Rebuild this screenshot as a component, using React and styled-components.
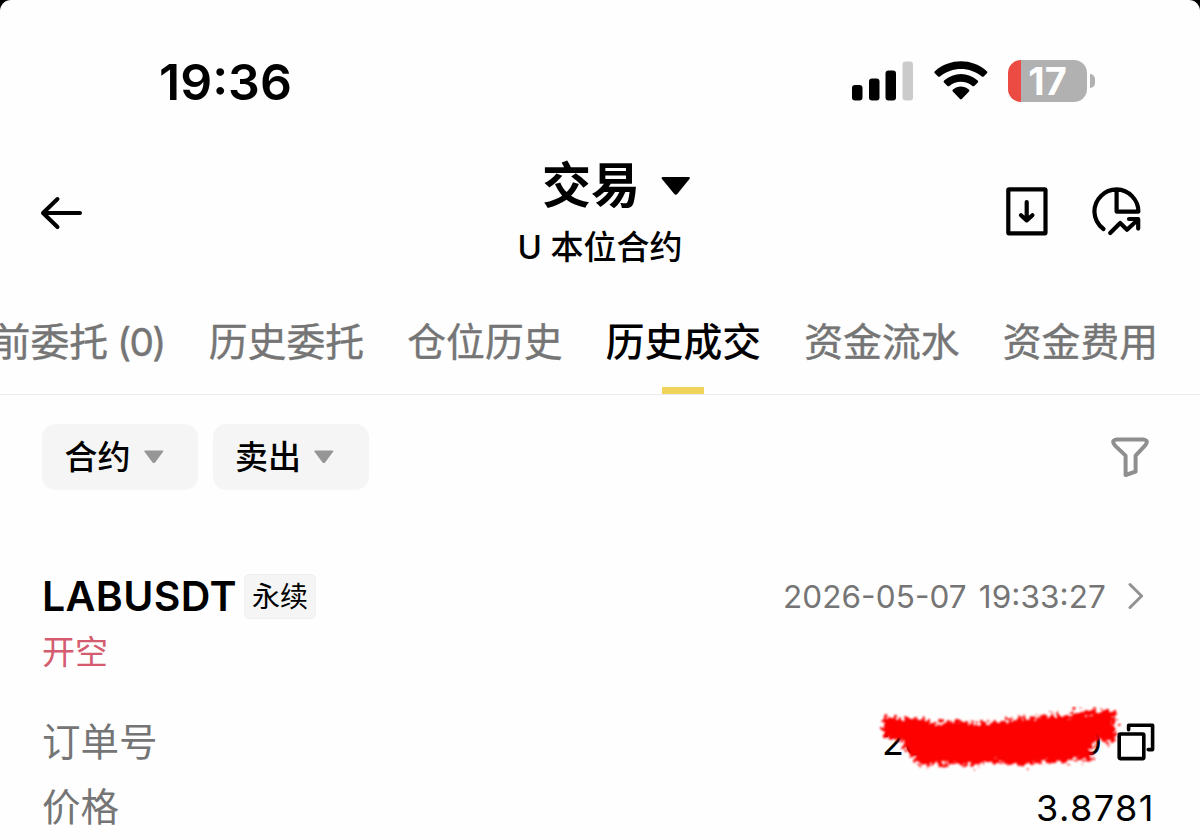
import React from 'react';
import styled, { createGlobalStyle } from 'styled-components';

const tabs = [
  { name: '当前委托', count: 0 },
  { name: '历史委托' },
  { name: '仓位历史' },
  { name: '历史成交', active: true },
  { name: '资金流水' },
  { name: '资金费用' },
];
const filters = ['合约', '卖出'];

function App() {
  return (
    <>
      <GlobalStyle />
      <Screen>
        <StatusBar>
          <Clock>19:36</Clock>
          <StatusIcons>
            <SignalIcon />
            <WifiIcon />
            <Battery>
              <BatteryBody>17</BatteryBody>
              <BatteryTip />
            </Battery>
          </StatusIcons>
        </StatusBar>

        <Header>
          <BackIcon />
          <Heading>
            <Title>
              交易
              <TitleCaret />
            </Title>
            <Subtitle>U 本位合约</Subtitle>
          </Heading>
          <HeaderActions>
            <DownloadIcon />
            <ChartIcon />
          </HeaderActions>
        </Header>

        <TabBar>
          {tabs.map((tab) => (
            <Tab key={tab.name} $active={tab.active}>
              <span>
                {tab.name}
                {tab.count !== undefined && <Count> ({tab.count})</Count>}
              </span>
            </Tab>
          ))}
        </TabBar>

        <FilterBar>
          {filters.map((name) => (
            <FilterButton key={name}>
              <span>{name}</span>
              <SmallCaret />
            </FilterButton>
          ))}
          <FunnelIcon />
        </FilterBar>

        <Trade>
          <TradeHead>
            <Symbol>LABUSDT</Symbol>
            <Tag>永续</Tag>
            <Time>2026-05-07 19:33:27</Time>
            <ChevronIcon />
          </TradeHead>
          <Side>开空</Side>
          <Row>
            <Label>订单号</Label>
            <OrderNumber>
              <span>20</span>
              <span>0</span>
              <Scribble />
            </OrderNumber>
            <CopyIcon />
          </Row>
          <Row>
            <Label>价格</Label>
            <Price>3.8781</Price>
          </Row>
        </Trade>
      </Screen>
    </>
  );
}
export default App;

function SignalIcon() {
  return (
    <svg width="62" height="40" viewBox="0 0 62 40">
      <rect x="0" y="24" width="10.5" height="15.5" rx="3" />
      <rect x="17" y="17.5" width="10.5" height="22" rx="3" />
      <rect x="33.5" y="9.5" width="10.5" height="30" rx="3" />
      <rect x="50.5" y="0.5" width="10.5" height="39" rx="3" fill="#cbcbcb" />
    </svg>
  );
}

function WifiIcon() {
  return (
    <svg width="54" height="40" viewBox="0 0 54 40">
      <path d="M0.8 12.2Q-0.2 11.2 0.9 10.2C16 -3 38 -3 52.8 10.2Q53.9 11.2 52.9 12.2L49.7 15.4Q48.8 16.3 47.8 15.4C36 5.4 18 5.4 6 15.4Q5 16.3 4.1 15.4Z" />
      <path d="M10 21.4Q9 20.4 10.1 19.4C20 10.7 34 10.7 43.7 19.4Q44.8 20.4 43.8 21.4L40.3 24.9Q39.4 25.8 38.4 24.9C31.5 19.4 22.3 19.4 15.4 24.9Q14.4 25.8 13.5 24.9Z" />
      <path d="M18.8 30.6Q17.8 29.6 19 28.6C23.6 24.4 30.2 24.4 34.8 28.6Q36 29.6 35 30.6L27.8 38Q26.9 38.9 26 38Z" />
    </svg>
  );
}

function BackIcon() {
  return (
    <svg width="44" height="36" viewBox="0 0 44 36" fill="none" stroke="#000" strokeWidth="4" strokeLinecap="round" strokeLinejoin="round">
      <path d="M40 18H3M17.5 4L3 18L17.5 32" />
    </svg>
  );
}

function TitleCaret() {
  return (
    <svg width="30" height="20" viewBox="0 0 30 20">
      <path d="M2.2 1H27.3Q30 1 28.2 3.3L16.5 17.8Q14.8 19.6 13.1 17.8L1.2 3.3Q-0.5 1 2.2 1Z" />
    </svg>
  );
}

function SmallCaret() {
  return (
    <svg width="20" height="14" viewBox="0 0 20 14" fill="#969696">
      <path d="M1.4 0.5H18.2Q20.2 0.5 18.9 2.1L11.1 12.4Q9.8 13.8 8.5 12.4L0.7 2.1Q-0.5 0.5 1.4 0.5Z" />
    </svg>
  );
}

function DownloadIcon() {
  return (
    <svg width="42" height="49" viewBox="0 0 42 49" fill="none" stroke="#000" strokeWidth="4.2" strokeLinecap="round" strokeLinejoin="round">
      <rect x="2.3" y="2.3" width="37.2" height="44" rx="0.8" />
      <path d="M20.7 15V33M15 28.2L20.7 33.4L26.4 28.2" />
    </svg>
  );
}

function ChartIcon() {
  return (
    <svg width="50" height="50" viewBox="0 0 50 50" fill="none" stroke="#000" strokeWidth="4.2" strokeLinecap="round" strokeLinejoin="round">
      <path d="M11.5 42A22.6 22.6 0 0 1 2.4 24.6A22.4 22.4 0 0 1 24.7 2.4A22.4 22.4 0 0 1 46.4 24.6H24.6V2.6" />
      <path d="M18.2 46L28.2 36L35 42.8L45.5 33M37 32H46.2V41.6" />
    </svg>
  );
}

function FunnelIcon() {
  return (
    <svg width="38" height="42" viewBox="0 0 38 42" fill="none" stroke="#8f8f8f" strokeWidth="4" strokeLinejoin="round">
      <path d="M5 2.6H33Q38 3.4 34.2 8.4L24.6 18.6V34.6L14.6 38V18.6L3.8 8.4Q0 3.4 5 2.6Z" />
    </svg>
  );
}

function ChevronIcon() {
  return (
    <svg width="16" height="28" viewBox="0 0 16 28" fill="none" stroke="#929292" strokeWidth="3" strokeLinecap="round" strokeLinejoin="round">
      <path d="M2 2.5L13.6 14L2 25.5" />
    </svg>
  );
}

function CopyIcon() {
  return (
    <svg width="38" height="38" viewBox="0 0 38 38" fill="none" stroke="#000" strokeWidth="3.6" strokeLinecap="round" strokeLinejoin="round">
      <rect x="2.2" y="11" width="24.6" height="24.6" rx="1" />
      <path d="M11.6 6.8V2.2H35.6V26.6H31.2" />
    </svg>
  );
}

function Scribble() {
  return (
    <ScribbleSvg viewBox="0 0 250 70">
      <filter id="rough" x="-5%" y="-15%" width="110%" height="130%">
        <feTurbulence type="fractalNoise" baseFrequency="0.24" numOctaves="2" seed="9" />
        <feDisplacementMap in="SourceGraphic" scale="17" xChannelSelector="R" yChannelSelector="G" />
        <feGaussianBlur stdDeviation="1" />
      </filter>
      <path
        filter="url(#rough)"
        fill="#fd0000"
        d="M11 11L24 13L34 11L50 14L66 17L84 15L108 17L130 15L152 12L178 9L198 9L206 5L216 6L228 4L236 5L243 4L243 35L236 38L228 32L220 42L220 56L206 53L194 57L172 56L150 60L124 56L102 59L82 58L64 59L44 58L40 50L33 45L29 33L20 34L11 30Z"
      />
    </ScribbleSvg>
  );
}

const GlobalStyle = createGlobalStyle`
  * {
    box-sizing: border-box;
  }
  body {
    margin: 0;
    background: #000;
  }
`;

const Screen = styled.div`
  width: 1200px;
  height: 840px;
  overflow: hidden;
  background: #fefefe;
  border-radius: 11px 11px 0 0;
  color: #000;
  font-family: Inter, 'Noto Sans CJK SC', sans-serif;
  svg {
    flex-shrink: 0;
    display: block;
  }
`;

const StatusBar = styled.div`
  display: flex;
  justify-content: space-between;
  height: 140px;
  padding: 58px 105px 0 159px;
`;

const Clock = styled.div`
  height: 48px;
  line-height: 48px;
  font-size: 50px;
  font-weight: 600;
`;

const StatusIcons = styled.div`
  display: flex;
  align-items: center;
  height: 45px;
  gap: 20px;
`;

const Battery = styled.div`
  display: flex;
  align-items: center;
  gap: 3px;
`;

const BatteryBody = styled.div`
  width: 79px;
  height: 42px;
  border-radius: 13px;
  background: linear-gradient(to right, #eb4b43 13px, #b1b1b1 13px);
  color: #fff;
  font-size: 38px;
  font-weight: 700;
  line-height: 43px;
  text-align: center;
`;

const BatteryTip = styled.div`
  width: 5px;
  height: 14px;
  border-radius: 0 5px 5px 0;
  background: #b1b1b1;
`;

const Header = styled.div`
  display: flex;
  justify-content: space-between;
  height: 155px;
  padding: 0 58px 0 40px;
  & > svg {
    margin-top: 55px;
  }
`;

const Heading = styled.div`
  display: flex;
  flex-direction: column;
  align-items: center;
  padding: 17px 0 0 111px;
`;

const Title = styled.div`
  display: flex;
  align-items: center;
  gap: 21px;
  height: 58px;
  margin-left: 32px;
  font-size: 49px;
  font-weight: 700;
  line-height: 58px;
`;

const Subtitle = styled.div`
  height: 60px;
  margin-left: -1px;
  font-size: 33px;
  font-weight: 500;
  line-height: 64px;
  white-space: nowrap;
`;

const HeaderActions = styled.div`
  display: flex;
  gap: 44px;
  padding-top: 47px;
`;

const TabBar = styled.div`
  display: flex;
  justify-content: flex-end;
  gap: 43.3px;
  height: 100px;
  padding-right: 42px;
  border-bottom: 1px solid #ebebeb;
`;

const Tab = styled.div`
  display: flex;
  flex-direction: column;
  align-items: center;
  justify-content: space-between;
  flex-shrink: 0;
  white-space: nowrap;
  font-size: 38.8px;
  line-height: 94px;
  font-weight: ${(props) => (props.$active ? 500 : 400)};
  color: ${(props) => (props.$active ? '#000' : '#757575')};
  -webkit-text-stroke: ${(props) => (props.$active ? 0 : '0.4px')} #757575;
  &::after {
    content: '';
    width: 42px;
    height: 8px;
    margin-top: -2px;
    background: ${(props) => (props.$active ? '#f0d35b' : 'transparent')};
  }
`;

const Count = styled.span`
  letter-spacing: -1.8px;
  margin-right: 1px;
`;

const FilterBar = styled.div`
  display: flex;
  gap: 14.5px;
  height: 123px;
  padding: 29px 51px 0 42px;
  & > svg {
    margin: 13px 0 0 auto;
  }
`;

const FilterButton = styled.div`
  display: flex;
  align-items: center;
  gap: 13px;
  width: 156px;
  height: 66px;
  padding-left: 22.5px;
  border-radius: 14px;
  background: #f5f5f5;
  font-size: 33px;
  font-weight: 500;
  span {
    padding-bottom: 5px;
  }
`;

const Trade = styled.div`
  padding: 55px 45px 0 42px;
`;

const TradeHead = styled.div`
  display: flex;
  align-items: center;
  height: 46px;
  & > svg {
    margin: 0 11px 0 22px;
  }
`;

const Symbol = styled.div`
  width: 202px;
  font-size: 41px;
  font-weight: 600;
  letter-spacing: 0.4px;
`;

const Tag = styled.div`
  width: 72px;
  height: 45px;
  border: 1px solid #f0f0f0;
  border-radius: 5px;
  background: #f5f5f5;
  font-size: 28px;
  line-height: 44px;
  text-align: center;
`;

const Time = styled.div`
  margin-left: auto;
  color: #757575;
  font-size: 31.5px;
  letter-spacing: 0.1px;
  word-spacing: 3px;
  font-feature-settings: 'case';
`;

const Side = styled.div`
  height: 90px;
  color: #d45c70;
  font-size: 33px;
  line-height: 66px;
`;

const Row = styled.div`
  display: flex;
  align-items: center;
  height: 65px;
`;

const Label = styled.div`
  margin-right: auto;
  padding-bottom: 6px;
  color: #757575;
  font-size: 38.5px;
`;

const OrderNumber = styled.div`
  position: relative;
  display: flex;
  justify-content: space-between;
  width: 220px;
  margin-right: 15px;
  font-size: 36px;
`;

const ScribbleSvg = styled.svg`
  position: absolute;
  left: -10px;
  top: -14px;
  width: 250px;
  height: 70px;
`;

const Price = styled.div`
  padding-top: 2px;
  font-size: 36px;
  letter-spacing: 1.5px;
`;
